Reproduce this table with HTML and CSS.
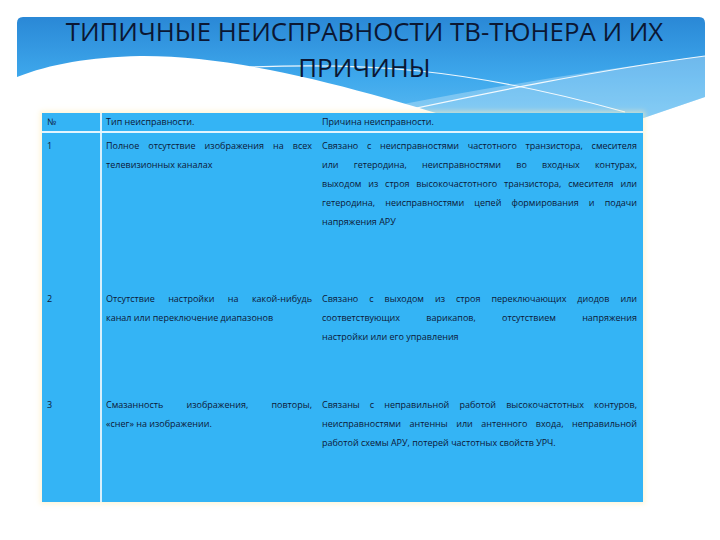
FILE: index.html
```html
<!DOCTYPE html>
<html lang="ru">
<head>
<meta charset="utf-8">
<title>Типичные неисправности ТВ-тюнера</title>
<link rel="stylesheet" href="styles.css">
</head>
<body>
<div class="slide">
  <svg class="banner-art" width="720" height="140" viewBox="0 0 720 140" aria-hidden="true">
    <defs>
      <linearGradient id="bg" x1="0" y1="0" x2="0" y2="1">
        <stop offset="0" stop-color="#2a88d6"/>
        <stop offset="0.55" stop-color="#3ea8ec"/>
        <stop offset="1" stop-color="#5cbcf2"/>
      </linearGradient>
    </defs>
    <path d="M17,23 Q17,17 23,17 L699,17 Q705,17 705,23 L705,97 L620,126 L480,126 C 380,96 250,55 140,56 C 90,57 50,64 17,77 Z" fill="url(#bg)"/>
    <path d="M300,126 C 430,96 580,72 705,56 L705,97 L620,126 Z" fill="#ffffff" fill-opacity="0.28"/>
    <path d="M330,126 C 420,108 560,75 705,56" fill="none" stroke="#ffffff" stroke-width="1.2" stroke-opacity="0.9"/>
    <path d="M250,67 C 360,63 460,66 625,112" fill="none" stroke="#ffffff" stroke-width="1.2" stroke-opacity="0.9"/>
  </svg>

  <h1 class="title">ТИПИЧНЫЕ <span class="strong">НЕИСПРАВНОСТИ</span> ТВ-ТЮНЕРА И ИХ<br>ПРИЧИНЫ</h1>

  <table class="faults">
    <colgroup>
      <col class="c-num">
      <col class="c-type">
      <col class="c-cause">
    </colgroup>
    <thead>
      <tr>
        <th class="num">№</th>
        <th>Тип неисправности.</th>
        <th>Причина неисправности.</th>
      </tr>
    </thead>
    <tbody>
      <tr class="r1">
        <td class="num">1</td>
        <td>
          <span class="ln">Полное отсутствие изображения на всех</span>
          <span class="ln last">телевизионных каналах</span>
        </td>
        <td>
          <span class="ln">Связано с неисправностями частотного транзистора, смесителя</span>
          <span class="ln">или гетеродина, неисправностями во входных контурах,</span>
          <span class="ln">выходом из строя высокочастотного транзистора, смесителя или</span>
          <span class="ln">гетеродина, неисправностями цепей формирования и подачи</span>
          <span class="ln last">напряжения АРУ</span>
        </td>
      </tr>
      <tr class="r2">
        <td class="num">2</td>
        <td>
          <span class="ln">Отсутствие настройки на какой-нибудь</span>
          <span class="ln last">канал или переключение диапазонов</span>
        </td>
        <td>
          <span class="ln">Связано с выходом из строя переключающих диодов или</span>
          <span class="ln">соответствующих варикапов, отсутствием напряжения</span>
          <span class="ln last">настройки или его управления</span>
        </td>
      </tr>
      <tr class="r3">
        <td class="num">3</td>
        <td>
          <span class="ln">Смазанность изображения, повторы,</span>
          <span class="ln last">«снег» на изображении.</span>
        </td>
        <td>
          <span class="ln">Связаны с неправильной работой высокочастотных контуров,</span>
          <span class="ln">неисправностями антенны или антенного входа, неправильной</span>
          <span class="ln last">работой схемы АРУ, потерей частотных свойств УРЧ.</span>
        </td>
      </tr>
    </tbody>
  </table>
</div>
</body>
</html>
```

FILE: styles.css
```css
html, body {
  margin: 0;
  padding: 0;
  background: #ffffff;
}

.slide {
  position: relative;
  width: 720px;
  height: 540px;
  overflow: hidden;
  background: #ffffff;
}

.banner-art {
  position: absolute;
  left: 0;
  top: 0;
  z-index: 0;
}

.title {
  position: relative;
  z-index: 1;
  margin: 13px 0 0 0;
  padding: 0 0 0 9px;
  font-family: "Open Sans", "DejaVu Sans", sans-serif;
  font-weight: 400;
  font-size: 25.8px;
  line-height: 36px;
  letter-spacing: 0;
  color: #0b1733;
  text-align: center;
}

.title .strong {
  font-weight: 500;
}

.faults {
  position: relative;
  z-index: 1;
  margin: 28px 0 0 42px;
  width: 601px;
  table-layout: fixed;
  border-collapse: collapse;
  background: #34b4f5;
  box-shadow: 0 0 5px 2px rgba(255, 236, 180, 0.55);
  font-family: "Open Sans", "DejaVu Sans", sans-serif;
  font-size: 9px;
  color: #0c1838;
}

.c-num { width: 59px; }
.c-type { width: 217px; }
.c-cause { width: 325px; }

.faults th,
.faults td {
  padding: 0 6px 0 4px;
  vertical-align: top;
  text-align: left;
  font-weight: 400;
}

.faults th {
  height: 18px;
  line-height: 18px;
  border-bottom: 2px solid #e4f5fe;
}

.faults td {
  padding-top: 3px;
  line-height: 19px;
}

.faults .num {
  padding-left: 5px;
  border-right: 2px solid #d6f0fd;
}

.r1 td { height: 150px; }
.r2 td { height: 103px; }
.r3 td { height: 107px; }

.ln {
  display: block;
  white-space: nowrap;
  text-align: justify;
  text-align-last: justify;
}

.ln.last {
  text-align-last: left;
}
```
